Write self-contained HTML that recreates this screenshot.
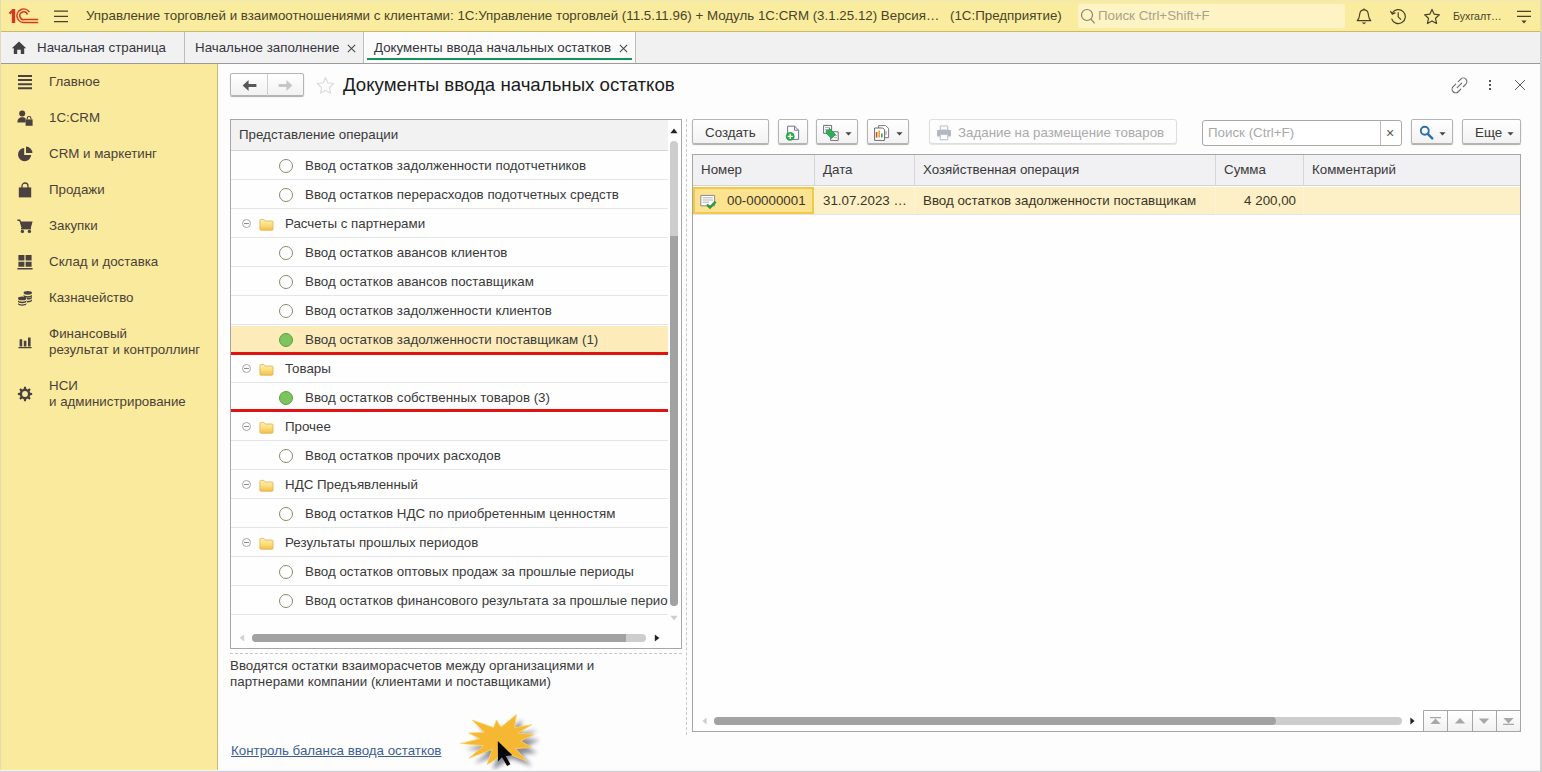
<!DOCTYPE html>
<html lang="ru">
<head>
<meta charset="utf-8">
<title>Документы ввода начальных остатков</title>
<style>
*{box-sizing:border-box;margin:0;padding:0}
html,body{width:1542px;height:772px;overflow:hidden;background:#fdfdfd}
body{font-family:"Liberation Sans",sans-serif;font-size:13.33px;color:#333;position:relative}
.abs{position:absolute}
.t{position:absolute;white-space:nowrap;line-height:16px}
/* top bar */
#top{left:0;top:0;width:1542px;height:32px;background:#f9ec9e}
#tabs{left:0;top:32px;width:1542px;height:32px;background:#f1f1f1;border-bottom:1px solid #9a9a9a}
#side{left:0;top:64px;width:218px;height:708px;background:#faea9e;border-right:1px solid #c8ba72}
.sep{position:absolute;top:32px;width:1px;height:31px;background:#bdbdbd}
.btn{position:absolute;height:26px;border:1px solid #b4b4b4;border-radius:2px;background:linear-gradient(#ffffff,#f2f2f2);box-shadow:0 1px 1px rgba(0,0,0,.32)}
.row{position:absolute;left:231px;width:437px;height:29px;border-bottom:1px solid #e3e5e9}
.rad{position:absolute;left:279px;width:14px;height:14px;border:1px solid #8a8a6a;border-radius:50%;background:#fff}
.rad.g{background:#7cc45c;border-color:#5f9d48}
.hd{position:absolute;top:155px;height:30px;background:#f1f0f3;border-right:1px solid #d6d6d6}
</style>
</head>
<body>
<!-- ===== top bar ===== -->
<div id="top" class="abs">
 <div class="abs" style="left:0;top:31px;width:1542px;height:1px;background:#c9ba66"></div>
 <!-- 1C logo -->
 <svg class="abs" style="left:8px;top:8px" width="32" height="16" viewBox="8 8 32 16" fill="none" stroke="#d8371c">
  <path d="M9.4 13.6 L13.4 10.2" stroke-width="2.2"/>
  <path d="M13.5 9 V23" stroke-width="3.4"/>
  <path d="M29.4 12.2 A6.7 6.7 0 1 0 23.9 22.4 H38.2" stroke-width="1.5"/>
  <path d="M27.4 14.4 A3.9 3.9 0 1 0 24.2 19.6 H38.2" stroke-width="1.5"/>
 </svg>
 <!-- hamburger -->
 <svg class="abs" style="left:53px;top:9px" width="16" height="14" viewBox="0 0 16 14" stroke="#4b4129" stroke-width="1.2"><path d="M1 2.1H15M1 7.4H15M1 12.6H15"/></svg>
 <div class="t" style="left:86px;top:8px;color:#4a4428">Управление торговлей и взаимоотношениями с клиентами: 1С:Управление торговлей (11.5.11.96) + Модуль 1С:CRM (3.1.25.12) Версия…</div>
 <div class="t" style="left:950px;top:8px;color:#4a4428">(1С:Предприятие)</div>
 <!-- search -->
 <div class="abs" style="left:1078px;top:4px;width:267px;height:24px;background:#fdf3c4;border-radius:2px"></div>
 <svg class="abs" style="left:1079px;top:7px" width="18" height="18" viewBox="0 0 18 18" fill="none" stroke="#8a8468" stroke-width="1.2"><circle cx="8" cy="8" r="5.5"/><path d="M12 12.2L15.6 16.4"/></svg>
 <div class="t" style="left:1098px;top:8px;color:#a9a38a">Поиск Ctrl+Shift+F</div>
 <!-- bell -->
 <svg class="abs" style="left:1356px;top:8px" width="16" height="17" viewBox="0 0 16 17" fill="none" stroke="#4b4129" stroke-width="1.2" stroke-linejoin="round"><path d="M1.2 12.6 C3.6 10.6 3.4 8 3.8 5.6 C4.2 3.2 5.8 1.8 8 1.8 C10.2 1.8 11.8 3.2 12.2 5.6 C12.6 8 12.4 10.6 14.8 12.6 Z"/><path d="M7.2 1.6 a0.9 0.9 0 0 1 1.6 0"/><path d="M5.6 14.6 H10.4 L8 16.2Z" fill="#4b4129" stroke="none"/></svg>
 <!-- history -->
 <svg class="abs" style="left:1389px;top:8px" width="18" height="17" viewBox="0 0 18 17" fill="none" stroke="#4b4129" stroke-width="1.2"><path d="M3.2 5.2 A7 7 0 1 1 2.6 10.6"/><path d="M1.4 3.2 L3.4 6.2 L6.4 4.6" stroke-linejoin="round"/><path d="M9.2 4.2 V8.8 L12 11.6"/></svg>
 <!-- star -->
 <svg class="abs" style="left:1423px;top:8px" width="18" height="17" viewBox="0 0 18 17" fill="none" stroke="#4b4129" stroke-width="1.2" stroke-linejoin="round"><path d="M9 1.4 L11.2 6.2 L16.4 6.8 L12.5 10.3 L13.6 15.5 L9 12.9 L4.4 15.5 L5.5 10.3 L1.6 6.8 L6.8 6.2 Z"/></svg>
 <div class="t" style="left:1453px;top:9px;font-size:10.67px;line-height:14px;color:#4a4428">Бухгалт…</div>
 <svg class="abs" style="left:1516px;top:9px" width="16" height="16" viewBox="0 0 16 16" stroke="#4b4129" stroke-width="1.2"><path d="M1 2.4H15M1 7.4H15"/><path d="M5.4 11.6H10.6L8 14.4Z" fill="#4b4129" stroke="none"/></svg>
</div>
<div id="tabs" class="abs"></div>
<div class="abs" style="left:364px;top:32px;width:271px;height:31px;background:#fbfbfb"></div>
<div class="sep" style="left:184px"></div><div class="sep" style="left:363px"></div><div class="sep" style="left:635px"></div>
<div class="abs" style="left:367px;top:58px;width:265px;height:2px;background:#14915a"></div>
<svg class="abs" style="left:11px;top:41px" width="16" height="14" viewBox="0 0 16 14" fill="#404045"><path d="M8 0.6 L15.2 7.2 H13.2 V13 H9.8 V8.8 H6.2 V13 H2.8 V7.2 H0.8 Z"/></svg>
<div class="t" style="left:37px;top:40px;color:#35353d">Начальная страница</div>
<div class="t" style="left:195px;top:40px;color:#35353d">Начальное заполнение</div>
<svg class="abs" style="left:347px;top:44px" width="9" height="9" viewBox="0 0 9 9" stroke="#4a4a4a" stroke-width="1.1"><path d="M0.8 0.8L8.2 8.2M8.2 0.8L0.8 8.2"/></svg>
<div class="t" style="left:374px;top:40px;color:#35353d">Документы ввода начальных остатков</div>
<svg class="abs" style="left:619px;top:44px" width="9" height="9" viewBox="0 0 9 9" stroke="#4a4a4a" stroke-width="1.1"><path d="M0.8 0.8L8.2 8.2M8.2 0.8L0.8 8.2"/></svg>
<div id="side" class="abs"></div>
<svg class="abs" style="left:17px;top:74px" width="16" height="16" viewBox="0 0 16 16" fill="#4b4140"><path d="M1 1h14v2H1zM1 5h14v2H1zM1 9.2h14v2H1zM1 13.2h14v2H1z"/></svg><div class="t" style="left:49px;top:74px;color:#4a4238">Главное</div>
<svg class="abs" style="left:17px;top:110px" width="16" height="16" viewBox="0 0 16 16" fill="#4b4140"><circle cx="5.2" cy="3.6" r="3"/><path d="M0.4 12.4 C0.4 8.6 2.4 7.2 5.2 7.2 C6.8 7.2 8 7.6 8.6 8.6 V12.4Z"/><path d="M8.6 9.4h7v6.4h-7z"/><path d="M10.2 9.6 V8.4 a1.9 1.9 0 0 1 3.8 0 V9.6" fill="none" stroke="#4b4140" stroke-width="1.1"/></svg><div class="t" style="left:49px;top:110px;color:#4a4238">1С:CRM</div>
<svg class="abs" style="left:17px;top:146px" width="16" height="16" viewBox="0 0 16 16" fill="#4b4140"><path d="M7.2 2 A6.6 6.6 0 1 0 14.2 9 H7.2Z"/><path d="M9 0.6 A6.6 6.6 0 0 1 15.4 7 H9Z"/></svg><div class="t" style="left:49px;top:146px;color:#4a4238">CRM и маркетинг</div>
<svg class="abs" style="left:17px;top:182px" width="16" height="16" viewBox="0 0 16 16" fill="#4b4140"><path d="M1.8 5.4h12.4v10H1.8z"/><path d="M5 7.4 V4 a3 3 0 0 1 6 0 V7.4" fill="none" stroke="#4b4140" stroke-width="1.3"/></svg><div class="t" style="left:49px;top:182px;color:#4a4238">Продажи</div>
<svg class="abs" style="left:17px;top:218px" width="16" height="16" viewBox="0 0 16 16" fill="#4b4140"><path d="M0.4 1.4h2.8l0.8 2h11.6l-1.8 6.6H4.6L2.4 3H0.4z"/><circle cx="5.4" cy="13.4" r="1.7"/><circle cx="12.4" cy="13.4" r="1.7"/><path d="M4 10h10v1.4H4z"/></svg><div class="t" style="left:49px;top:218px;color:#4a4238">Закупки</div>
<svg class="abs" style="left:17px;top:254px" width="16" height="16" viewBox="0 0 16 16" fill="#4b4140"><path d="M1.4 1h6v5.6h-6zM8.6 1h6v5.6h-6zM1.4 7.8h6v5h-6zM8.6 7.8h6v5h-6zM0.4 14h15.2v1.4H0.4z"/></svg><div class="t" style="left:49px;top:254px;color:#4a4238">Склад и доставка</div>
<svg class="abs" style="left:17px;top:290px" width="16" height="16" viewBox="0 0 16 16" fill="#4b4140"><ellipse cx="10.8" cy="2.8" rx="4.2" ry="1.9"/><path d="M6.6 4.4c0 2.3 8.4 2.3 8.4 0v1.5c0 2.3-8.4 2.3-8.4 0z"/><path d="M10 9.6 c2.4 0.1 5-0.6 5-1.9v-1.5c0 1.3-2.6 2-5 1.9z"/><path d="M10 12.4 c2.4 0.1 5-0.6 5-1.9V9c0 1.3-2.6 2-5 1.9z"/><ellipse cx="5.2" cy="8.4" rx="4.2" ry="1.9"/><path d="M1 10c0 2.3 8.4 2.3 8.4 0v1.5c0 2.3-8.4 2.3-8.4 0z"/><path d="M1 12.8c0 2.3 8.4 2.3 8.4 0v1.3c0 2.3-8.4 2.3-8.4 0z"/></svg><div class="t" style="left:49px;top:290px;color:#4a4238">Казначейство</div>
<svg class="abs" style="left:17px;top:334px" width="16" height="16" viewBox="0 0 16 16" fill="#4b4140"><path d="M2.6 5.2h2.6v7.4H2.6zM6.8 6.8h2.6v5.8H6.8zM11 3.4h2.6v9.2H11zM1.4 13h13.2v1.2H1.4z"/></svg><div class="t" style="left:49px;top:326px;color:#4a4238">Финансовый</div><div class="t" style="left:49px;top:342px;color:#4a4238">результат и контроллинг</div>
<svg class="abs" style="left:17px;top:386px" width="16" height="16" viewBox="0 0 16 16" fill="#4b4140"><path fill-rule="evenodd" d="M6.74 2.75 L7.04 0.86 L8.96 0.86 L9.26 2.75 L10.82 3.40 L12.37 2.28 L13.72 3.63 L12.60 5.18 L13.25 6.74 L15.14 7.04 L15.14 8.96 L13.25 9.26 L12.60 10.82 L13.72 12.37 L12.37 13.72 L10.82 12.60 L9.26 13.25 L8.96 15.14 L7.04 15.14 L6.74 13.25 L5.18 12.60 L3.63 13.72 L2.28 12.37 L3.40 10.82 L2.75 9.26 L0.86 8.96 L0.86 7.04 L2.75 6.74 L3.40 5.18 L2.28 3.63 L3.63 2.28 L5.18 3.40Z M5.1 8 a2.9 2.9 0 1 0 5.8 0 a2.9 2.9 0 1 0 -5.8 0Z"/></svg><div class="t" style="left:49px;top:378px;color:#4a4238">НСИ</div><div class="t" style="left:49px;top:394px;color:#4a4238">и администрирование</div>
<!-- ===== form header ===== -->
<div class="btn" style="left:230px;top:73px;width:74px;height:23px"></div>
<div class="abs" style="left:267px;top:74px;width:1px;height:22px;background:#cfcfcf"></div>
<svg class="abs" style="left:242px;top:79px" width="15" height="13" viewBox="0 0 15 13" fill="#595959"><path d="M0.6 6.5 L6.6 1 V4.9 H14.4 V8.1 H6.6 V12Z"/></svg>
<svg class="abs" style="left:278px;top:79px" width="15" height="13" viewBox="0 0 15 13" fill="#c6c6c6"><path d="M14.4 6.5 L8.4 1 V4.9 H0.6 V8.1 H8.4 V12Z"/></svg>
<svg class="abs" style="left:316px;top:76px" width="19" height="19" viewBox="0 0 19 19" fill="none" stroke="#dcdcdc" stroke-width="1.2" stroke-linejoin="round"><path d="M9.5 1.4 L11.9 6.9 L17.8 7.5 L13.4 11.5 L14.6 17.3 L9.5 14.3 L4.4 17.3 L5.6 11.5 L1.2 7.5 L7.1 6.9 Z"/></svg>
<div class="t" style="left:343px;top:74px;font-size:18.67px;line-height:22px;color:#1c1c1c">Документы ввода начальных остатков</div>
<!-- right icons -->
<svg class="abs" style="left:1451px;top:77px" width="17" height="17" viewBox="0 0 17 17" fill="none" stroke="#6a6a6a" stroke-width="1.1" stroke-linecap="round"><path d="M7.2 4.6 L9.75 2.05 A3.6 3.6 0 0 1 14.85 7.15 L12.3 9.75"/><path d="M9.8 12.2 L7.25 14.75 A3.6 3.6 0 0 1 2.15 9.65 L4.7 7.05"/><path d="M6.2 10.7 L10.7 6.2"/></svg>
<div class="abs" style="left:1489px;top:80px;width:2px;height:2px;background:#555;box-shadow:0 4px 0 #555,0 8px 0 #555"></div>
<svg class="abs" style="left:1514px;top:79px" width="12" height="12" viewBox="0 0 12 12" stroke="#555" stroke-width="1"><path d="M1.1 1.1L10.9 10.9M10.9 1.1L1.1 10.9"/></svg>
<svg width="0" height="0" style="position:absolute"><defs><linearGradient id="fg" x1="0" y1="0" x2="0" y2="1"><stop offset="0" stop-color="#fdf0b4"/><stop offset="0.45" stop-color="#fbe184"/><stop offset="1" stop-color="#f3bf4c"/></linearGradient></defs></svg>
<!-- ===== tree ===== -->
<div class="abs" style="left:230px;top:119px;width:452px;height:530px;border:1px solid #a6a6a6;background:#fefefe"></div>
<div class="abs" style="left:231px;top:120px;width:437px;height:31px;background:#f2f2f2;border-bottom:1px solid #d4d4d4"></div>
<div class="t" style="left:239px;top:127px;color:#3a3a3a">Представление операции</div>
<div class="row" style="top:151px"></div><div class="rad" style="top:159px"></div><div class="t" style="left:305px;top:158px;color:#3a3a3a;max-width:363px;overflow:hidden">Ввод остатков задолженности подотчетников</div>
<div class="row" style="top:180px"></div><div class="rad" style="top:188px"></div><div class="t" style="left:305px;top:187px;color:#3a3a3a;max-width:363px;overflow:hidden">Ввод остатков перерасходов подотчетных средств</div>
<div class="row" style="top:209px"></div><div class="abs" style="left:242px;top:219px;width:9px;height:9px;border:1px solid #a6a6a6;border-radius:50%"></div><div class="abs" style="left:244px;top:223px;width:5px;height:1px;background:#8c8c8c"></div><svg class="abs" style="left:259px;top:218px" width="15" height="13" viewBox="0 0 15 13"><path d="M0.9 2.4 a1 1 0 0 1 1-1 H4.8 L6.2 3 H13 a1 1 0 0 1 1 1 V11.2 a1 1 0 0 1-1 1 H1.9 a1 1 0 0 1-1-1Z" fill="url(#fg)" stroke="#e3b04a" stroke-width="0.8"/></svg><div class="t" style="left:285px;top:216px;color:#3a3a3a">Расчеты с партнерами</div>
<div class="row" style="top:238px"></div><div class="rad" style="top:246px"></div><div class="t" style="left:305px;top:245px;color:#3a3a3a;max-width:363px;overflow:hidden">Ввод остатков авансов клиентов</div>
<div class="row" style="top:267px"></div><div class="rad" style="top:275px"></div><div class="t" style="left:305px;top:274px;color:#3a3a3a;max-width:363px;overflow:hidden">Ввод остатков авансов поставщикам</div>
<div class="row" style="top:296px"></div><div class="rad" style="top:304px"></div><div class="t" style="left:305px;top:303px;color:#3a3a3a;max-width:363px;overflow:hidden">Ввод остатков задолженности клиентов</div>
<div class="row" style="top:325px"></div><div class="abs" style="left:231px;top:326px;width:437px;height:26px;background:#fdecba"></div><div class="rad g" style="top:333px"></div><div class="t" style="left:305px;top:332px;color:#3a3a3a;max-width:363px;overflow:hidden">Ввод остатков задолженности поставщикам (1)</div>
<div class="row" style="top:354px"></div><div class="abs" style="left:242px;top:364px;width:9px;height:9px;border:1px solid #a6a6a6;border-radius:50%"></div><div class="abs" style="left:244px;top:368px;width:5px;height:1px;background:#8c8c8c"></div><svg class="abs" style="left:259px;top:363px" width="15" height="13" viewBox="0 0 15 13"><path d="M0.9 2.4 a1 1 0 0 1 1-1 H4.8 L6.2 3 H13 a1 1 0 0 1 1 1 V11.2 a1 1 0 0 1-1 1 H1.9 a1 1 0 0 1-1-1Z" fill="url(#fg)" stroke="#e3b04a" stroke-width="0.8"/></svg><div class="t" style="left:285px;top:361px;color:#3a3a3a">Товары</div>
<div class="row" style="top:383px"></div><div class="rad g" style="top:391px"></div><div class="t" style="left:305px;top:390px;color:#3a3a3a;max-width:363px;overflow:hidden">Ввод остатков собственных товаров (3)</div>
<div class="row" style="top:412px"></div><div class="abs" style="left:242px;top:422px;width:9px;height:9px;border:1px solid #a6a6a6;border-radius:50%"></div><div class="abs" style="left:244px;top:426px;width:5px;height:1px;background:#8c8c8c"></div><svg class="abs" style="left:259px;top:421px" width="15" height="13" viewBox="0 0 15 13"><path d="M0.9 2.4 a1 1 0 0 1 1-1 H4.8 L6.2 3 H13 a1 1 0 0 1 1 1 V11.2 a1 1 0 0 1-1 1 H1.9 a1 1 0 0 1-1-1Z" fill="url(#fg)" stroke="#e3b04a" stroke-width="0.8"/></svg><div class="t" style="left:285px;top:419px;color:#3a3a3a">Прочее</div>
<div class="row" style="top:441px"></div><div class="rad" style="top:449px"></div><div class="t" style="left:305px;top:448px;color:#3a3a3a;max-width:363px;overflow:hidden">Ввод остатков прочих расходов</div>
<div class="row" style="top:470px"></div><div class="abs" style="left:242px;top:480px;width:9px;height:9px;border:1px solid #a6a6a6;border-radius:50%"></div><div class="abs" style="left:244px;top:484px;width:5px;height:1px;background:#8c8c8c"></div><svg class="abs" style="left:259px;top:479px" width="15" height="13" viewBox="0 0 15 13"><path d="M0.9 2.4 a1 1 0 0 1 1-1 H4.8 L6.2 3 H13 a1 1 0 0 1 1 1 V11.2 a1 1 0 0 1-1 1 H1.9 a1 1 0 0 1-1-1Z" fill="url(#fg)" stroke="#e3b04a" stroke-width="0.8"/></svg><div class="t" style="left:285px;top:477px;color:#3a3a3a">НДС Предъявленный</div>
<div class="row" style="top:499px"></div><div class="rad" style="top:507px"></div><div class="t" style="left:305px;top:506px;color:#3a3a3a;max-width:363px;overflow:hidden">Ввод остатков НДС по приобретенным ценностям</div>
<div class="row" style="top:528px"></div><div class="abs" style="left:242px;top:538px;width:9px;height:9px;border:1px solid #a6a6a6;border-radius:50%"></div><div class="abs" style="left:244px;top:542px;width:5px;height:1px;background:#8c8c8c"></div><svg class="abs" style="left:259px;top:537px" width="15" height="13" viewBox="0 0 15 13"><path d="M0.9 2.4 a1 1 0 0 1 1-1 H4.8 L6.2 3 H13 a1 1 0 0 1 1 1 V11.2 a1 1 0 0 1-1 1 H1.9 a1 1 0 0 1-1-1Z" fill="url(#fg)" stroke="#e3b04a" stroke-width="0.8"/></svg><div class="t" style="left:285px;top:535px;color:#3a3a3a">Результаты прошлых периодов</div>
<div class="row" style="top:557px"></div><div class="rad" style="top:565px"></div><div class="t" style="left:305px;top:564px;color:#3a3a3a;max-width:363px;overflow:hidden">Ввод остатков оптовых продаж за прошлые периоды</div>
<div class="row" style="top:586px"></div><div class="rad" style="top:594px"></div><div class="t" style="left:305px;top:593px;color:#3a3a3a;max-width:363px;overflow:hidden">Ввод остатков финансового результата за прошлые перио</div>
<div class="abs" style="left:231px;top:352px;width:437px;height:3px;background:#e31212"></div>
<div class="abs" style="left:231px;top:409px;width:437px;height:3px;background:#e31212"></div>
<!-- v scrollbar -->
<div class="abs" style="left:668px;top:120px;width:13px;height:510px;background:#fefefe"></div>
<svg class="abs" style="left:670px;top:128px" width="8" height="6" viewBox="0 0 8 6" fill="#222"><path d="M4 0.6L7.6 5.2H0.4Z"/></svg>
<div class="abs" style="left:670px;top:141px;width:8px;height:465px;background:#cdcdcd;border-radius:4px"></div>
<div class="abs" style="left:670px;top:236px;width:8px;height:370px;background:#a2a2a2;border-radius:0 0 4px 4px"></div>
<svg class="abs" style="left:670px;top:614.5px" width="8" height="6" viewBox="0 0 8 6" fill="#cfcfcf"><path d="M4 5.4L7.6 0.8H0.4Z"/></svg>
<!-- h scrollbar -->
<div class="abs" style="left:231px;top:626px;width:450px;height:22px;background:#fefefe"></div>
<svg class="abs" style="left:239px;top:634px" width="6" height="8" viewBox="0 0 6 8" fill="#d2d2d2"><path d="M0.6 4L5.2 0.4V7.6Z"/></svg>
<div class="abs" style="left:252px;top:634px;width:394px;height:8px;background:#cdcdcd;border-radius:4px"></div>
<div class="abs" style="left:252px;top:634px;width:373.5px;height:8px;background:#a2a2a2;border-radius:4px 0 0 4px"></div>
<svg class="abs" style="left:654px;top:634px" width="6" height="8" viewBox="0 0 6 8" fill="#222"><path d="M5.4 4L0.8 0.4V7.6Z"/></svg>
<!-- dashed splitters -->
<div class="abs" style="left:230px;top:653px;width:452px;height:0;border-top:1px dashed #c8c8c8"></div>
<div class="abs" style="left:686px;top:119px;width:0;height:616px;border-left:1px dashed #c8c8c8"></div>
<div class="t" style="left:230px;top:658px;color:#3a3a3a">Вводятся остатки взаиморасчетов между организациями и</div>
<div class="t" style="left:230px;top:674px;color:#3a3a3a">партнерами компании (клиентами и поставщиками)</div>
<div class="t" style="left:231px;top:743px;color:#3d5f96;text-decoration:underline">Контроль баланса ввода остатков</div>
<!-- ===== toolbar ===== -->
<div class="btn" style="left:692px;top:119px;width:77px;height:25px"></div>
<div class="t" style="left:705px;top:125px;color:#3a3a3a">Создать</div>
<div class="btn" style="left:778px;top:119px;width:30px;height:25px"></div>
<svg class="abs" style="left:785px;top:125px" width="16" height="16" viewBox="0 0 16 16"><path d="M2.6 1.2 H9.6 L13.6 5.2 V14.4 H2.6Z" fill="#fff" stroke="#6f7590" stroke-width="1"/><path d="M9.6 1.2 V5.2 H13.6" fill="none" stroke="#6f7590" stroke-width="1"/><circle cx="5.2" cy="11.4" r="4.4" fill="#2fa64a"/><path d="M5.2 8.8V14M2.6 11.4H7.8" stroke="#fff" stroke-width="1.3"/></svg>
<div class="btn" style="left:816px;top:119px;width:42px;height:25px"></div>
<svg class="abs" style="left:822px;top:124px" width="18" height="18" viewBox="0 0 18 18"><path d="M1.6 1.4H9.6V9.4H1.6Z" fill="#fff" stroke="#707070" stroke-width="1"/><path d="M3 3.4H8M3 5.4H8" stroke="#9a9a9a" stroke-width="0.8"/><path d="M8.6 7.8H16.2V16.4H8.6Z" fill="#fff" stroke="#707070" stroke-width="1"/><path d="M12 11.6H15M12 13.6H15" stroke="#9a9a9a" stroke-width="0.8"/><path d="M4.2 6.2 L7.4 6.2 L7.4 4.2 L13.6 10.6 L9.6 14.4 L4.2 9.2Z" fill="#2fae5a" stroke="#1d8a42" stroke-width="0.7"/></svg>
<svg class="abs" style="left:845px;top:132px" width="7" height="4" viewBox="0 0 7 4" fill="#444"><path d="M0.4 0.2H6.6L3.5 3.6Z"/></svg>
<div class="btn" style="left:867px;top:119px;width:42px;height:25px"></div>
<svg class="abs" style="left:873px;top:124px" width="18" height="18" viewBox="0 0 18 18"><path d="M5.6 1.6H12.6L15.6 4.4V13.6H5.6Z" fill="#fff" stroke="#7b7b85" stroke-width="1"/><path d="M1.6 4H9.8L11.6 5.8V16.4H1.6Z" fill="#fff" stroke="#6b6b70" stroke-width="1"/><path d="M3.6 8V13.6" stroke="#d84a2a" stroke-width="1.6"/><path d="M6.2 6.4V13.6" stroke="#e8a020" stroke-width="1.6"/><path d="M8.8 9.4V13.6" stroke="#3aa04a" stroke-width="1.6"/><path d="M13 7V11" stroke="#9aa6c8" stroke-width="1.2"/></svg>
<svg class="abs" style="left:896px;top:132px" width="7" height="4" viewBox="0 0 7 4" fill="#444"><path d="M0.4 0.2H6.6L3.5 3.6Z"/></svg>
<div class="abs" style="left:929px;top:119px;width:248px;height:25px;border:1px solid #dedede;border-radius:3px;background:#fdfdfd;box-shadow:0 1px 1px rgba(0,0,0,.10)"></div>
<svg class="abs" style="left:936px;top:125px" width="16" height="16" viewBox="0 0 16 16"><path d="M4.2 1H11.8V5H4.2Z" fill="#fdfdfd" stroke="#b9bdc8" stroke-width="1"/><rect x="1" y="5" width="14" height="6.6" rx="1.2" fill="#b3b8c4"/><path d="M4.2 9.4H11.8V14.8H4.2Z" fill="#fdfdfd" stroke="#b9bdc8" stroke-width="1"/></svg>
<div class="t" style="left:958px;top:125px;color:#aaaaaa">Задание на размещение товаров</div>
<div class="abs" style="left:1202px;top:120px;width:200px;height:26px;border:1px solid #a8a8a8;border-radius:3px;background:#fff"></div>
<div class="abs" style="left:1380px;top:121px;width:1px;height:24px;background:#bdbdbd"></div>
<div class="t" style="left:1208px;top:125px;color:#a9a9a9">Поиск (Ctrl+F)</div>
<div class="t" style="left:1386px;top:125px;color:#555;font-size:14px">×</div>
<div class="btn" style="left:1411px;top:119px;width:42px;height:25px"></div>
<svg class="abs" style="left:1419px;top:125px" width="15" height="15" viewBox="0 0 15 15" fill="none" stroke="#2f6fa8"><circle cx="5.8" cy="5.8" r="4" stroke-width="1.9"/><path d="M8.8 8.8L13.2 13.4" stroke-width="2.4" stroke-linecap="round"/></svg>
<svg class="abs" style="left:1439px;top:132px" width="7" height="4" viewBox="0 0 7 4" fill="#444"><path d="M0.4 0.2H6.6L3.5 3.6Z"/></svg>
<div class="btn" style="left:1462px;top:119px;width:59px;height:25px"></div>
<div class="t" style="left:1475px;top:125px;color:#3a3a3a">Еще</div>
<svg class="abs" style="left:1507px;top:132px" width="7" height="4" viewBox="0 0 7 4" fill="#444"><path d="M0.4 0.2H6.6L3.5 3.6Z"/></svg>
<!-- ===== table ===== -->
<div class="abs" style="left:692px;top:154px;width:829px;height:578px;border:1px solid #a6a6a6;background:#fefefe"></div>
<div class="hd" style="left:693px;width:122px"></div>
<div class="hd" style="left:815px;width:100px"></div>
<div class="hd" style="left:915px;width:301px"></div>
<div class="hd" style="left:1216px;width:88px"></div>
<div class="hd" style="left:1304px;width:216px;border-right:0"></div>
<div class="abs" style="left:693px;top:185px;width:827px;height:1px;background:#d4d4d4"></div>
<div class="t" style="left:701px;top:162px;color:#3a3a3a">Номер</div>
<div class="t" style="left:823px;top:162px;color:#3a3a3a">Дата</div>
<div class="t" style="left:923px;top:162px;color:#3a3a3a">Хозяйственная операция</div>
<div class="t" style="left:1224px;top:162px;color:#3a3a3a">Сумма</div>
<div class="t" style="left:1312px;top:162px;color:#3a3a3a">Комментарий</div>
<div class="abs" style="left:693px;top:187px;width:827px;height:27px;background:#fdefc6"></div>
<div class="abs" style="left:693px;top:214px;width:827px;height:1px;background:#dfe5ee"></div>
<div class="abs" style="left:814px;top:187px;width:1px;height:27px;background:#fbf3da"></div>
<div class="abs" style="left:914px;top:187px;width:1px;height:27px;background:#fbf3da"></div>
<div class="abs" style="left:1215px;top:187px;width:1px;height:27px;background:#fbf3da"></div>
<div class="abs" style="left:1303px;top:187px;width:1px;height:27px;background:#fbf3da"></div>
<div class="abs" style="left:693px;top:187px;width:121px;height:27px;background:#fbe391;border:2px solid #f6c744"></div>
<svg class="abs" style="left:700px;top:194px" width="17" height="16" viewBox="0 0 17 16"><path d="M0.8 1.4H14.6V11.8H0.8Z" fill="#fff" stroke="#8a8a8a" stroke-width="1"/><path d="M2.6 3.8H12.8M2.6 6H12.8M2.6 8.2H9" stroke="#a8a8a8" stroke-width="0.9"/><path d="M7 10.6L10 13.6L15.6 7.6" fill="none" stroke="#2c9a3c" stroke-width="2.4"/></svg>
<div class="t" style="left:727px;top:193px;color:#3a3626">00-00000001</div>
<div class="t" style="left:823px;top:193px;color:#3a3626">31.07.2023 …</div>
<div class="t" style="left:923px;top:193px;color:#3a3626">Ввод остатков задолженности поставщикам</div>
<div class="t" style="left:1216px;top:193px;width:80px;text-align:right;color:#3a3626">4 200,00</div>
<!-- h scroll -->
<svg class="abs" style="left:702px;top:717px" width="5" height="8" viewBox="0 0 5 8" fill="#cfcfcf"><path d="M0.4 4L4.6 0.6V7.4Z"/></svg>
<div class="abs" style="left:714px;top:717px;width:688px;height:8px;background:#cdcdcd;border-radius:4px"></div>
<div class="abs" style="left:714px;top:717px;width:562px;height:8px;background:#a2a2a2;border-radius:4px"></div>
<svg class="abs" style="left:1410px;top:717px" width="5" height="8" viewBox="0 0 5 8" fill="#222"><path d="M4.6 4L0.4 0.6V7.4Z"/></svg>
<!-- nav buttons -->
<div class="abs" style="left:1423px;top:710px;width:98px;height:22px;background:linear-gradient(#ffffff,#f1f1f1);border:1px solid #a6a6a6;border-radius:0 0 2px 0"></div>
<div class="abs" style="left:1447px;top:711px;width:1px;height:20px;background:#a6a6a6"></div>
<div class="abs" style="left:1472px;top:711px;width:1px;height:20px;background:#a6a6a6"></div>
<div class="abs" style="left:1496px;top:711px;width:1px;height:20px;background:#a6a6a6"></div>
<svg class="abs" style="left:1429px;top:716px" width="13" height="10" viewBox="0 0 13 10" fill="#a8a8a8"><path d="M1 1H12V2.2H1zM6.5 2.6L11.6 8H1.4Z"/></svg>
<svg class="abs" style="left:1454px;top:717px" width="12" height="8" viewBox="0 0 12 8" fill="#a8a8a8"><path d="M6 1L11.2 6.6H0.8Z"/></svg>
<svg class="abs" style="left:1478px;top:717px" width="12" height="8" viewBox="0 0 12 8" fill="#a8a8a8"><path d="M6 7L11.2 1.4H0.8Z"/></svg>
<svg class="abs" style="left:1502px;top:716px" width="13" height="10" viewBox="0 0 13 10" fill="#a8a8a8"><path d="M1 7.8H12V9H1zM6.5 7.4L11.6 2H1.4Z"/></svg>
<!-- ===== click highlight + cursor ===== -->
<svg class="abs" style="left:440px;top:700px" width="120" height="72" viewBox="0 0 120 72">
<defs><filter id="sh" x="-30%" y="-30%" width="170%" height="170%"><feGaussianBlur stdDeviation="2.2"/></filter></defs>
<polygon points="56.4,20.0 61.0,27.0 76.5,14.5 74.6,27.5 91.8,24.7 77.9,33.1 94.2,34.5 80.7,41.0 91.8,47.6 75.5,48.5 86.7,61.0 66.0,53.0 47.0,64.8 52.2,49.4 28.9,58.3 43.4,45.7 20.5,43.4 40.1,38.7 28.4,33.1 44.3,32.2 32.2,20.0 53.6,27.5" transform="translate(5.5 5.5)" fill="#5c5c70" opacity="0.7" filter="url(#sh)"/>
<polygon points="56.4,20.0 61.0,27.0 76.5,14.5 74.6,27.5 91.8,24.7 77.9,33.1 94.2,34.5 80.7,41.0 91.8,47.6 75.5,48.5 86.7,61.0 66.0,53.0 47.0,64.8 52.2,49.4 28.9,58.3 43.4,45.7 20.5,43.4 40.1,38.7 28.4,33.1 44.3,32.2 32.2,20.0 53.6,27.5" fill="#f6b733" stroke="#fbd669" stroke-width="0.8" stroke-linejoin="miter"/>
<polygon points="57.8,41.0 58.0,61.5 62.0,57.2 67.1,65.9 70.4,64.3 65.7,56.0 72.3,55.2" fill="#050505"/>
</svg>
<!-- window edges -->
<div class="abs" style="left:0;top:0;width:1542px;height:1px;background:#efe7bd"></div>
<div class="abs" style="left:0;top:0;width:1px;height:772px;background:#e4dab6"></div>
<div class="abs" style="left:0;top:770px;width:1542px;height:1px;background:#f4f4f4"></div>
<div class="abs" style="left:0;top:771px;width:1542px;height:1px;background:#d2d2d4"></div>
<div class="abs" style="left:1540px;top:0;width:2px;height:772px;background:#d2d2d2"></div>
<div class="abs" style="left:1540px;top:0;width:2px;height:32px;background:#e6dca8"></div>
</body>
</html>
